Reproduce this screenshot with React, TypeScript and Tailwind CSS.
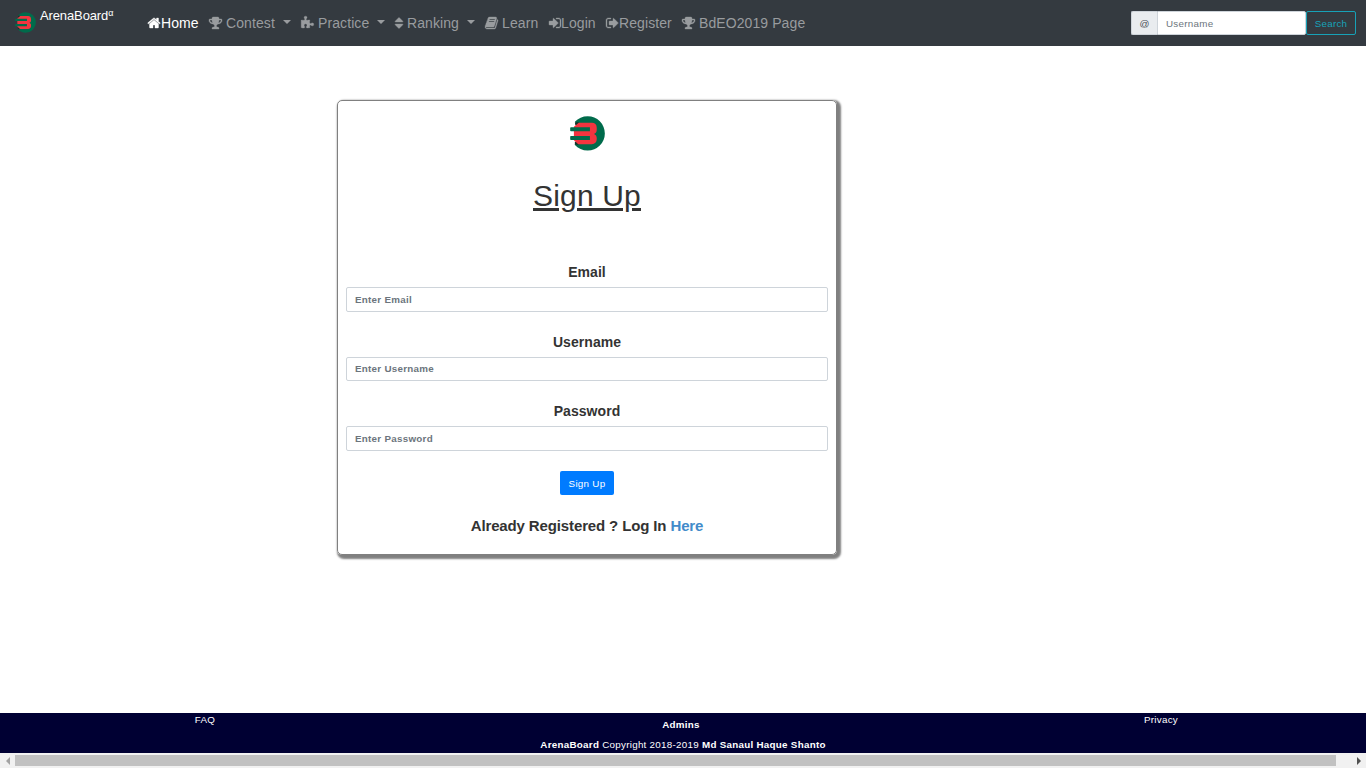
import React from "react";

const paths = {
  home: "M1408 992v480q0 26-19 45t-45 19h-384v-384h-256v384h-384q-26 0-45-19t-19-45v-480q0-1 .5-3t.5-3l575-474 575 474q1 2 1 6zm223-69l-62 74q-8 9-21 11h-3q-13 0-21-7l-692-577-692 577q-12 8-24 7-13-2-21-11l-62-74q-8-10-7-23.5t11-21.5l719-599q32-26 76-26t76 26l244 204v-195q0-14 9-23t23-9h192q14 0 23 9t9 23v408l219 182q10 8 11 21.5t-7 23.5z",
  trophy: "M522 883q-74-162-74-371h-256v96q0 78 94.5 162t235.5 113zm1078-275v-96h-256q0 209-74 371 141-29 235.500-113t94.500-162zm128-128v128q0 71-41.500 143t-112 130-173 97.500-215.500 44.500q-42 54-95 95-38 34-52.500 72.500t-14.500 89.500q0 54 30.500 91t97.500 37q75 0 133.500 45.500t58.500 114.500v64q0 14-9 23t-23 9h-832q-14 0-23-9t-9-23v-64q0-69 58.500-114.500t133.500-45.500q67 0 97.500-37t30.500-91q0-51-14.500-89.500t-52.500-72.500q-53-41-95-95-113-5-215.500-44.500t-173-97.500-112-130-41.500-143v-128q0-40 28-68t68-28h288v-96q0-66 47-113t113-47h576q66 0 113 47t47 113v96h288q40 0 68 28t28 68z",
  puzzle: "M1755 1083q0 81-44.500 135t-123.500 54q-41 0-77.500-17.500t-59-38-56.500-38-71-17.500q-110 0-110 124 0 39 16 115t15 115v5q-22 0-33 1-34 3-97.500 11.500t-115.500 13.500-98 5q-61 0-103-26.500t-42-83.500q0-37 17.500-71t38-56.500 38-59 17.500-77.500q0-79-54-123.500t-135-44.500q-84 0-143 45.500t-59 127.500q0 43 15 83t33.500 64.500 33.500 53 15 50.500q0 45-46 89-37 35-117 35-95 0-245-24-9-2-27.500-4t-27.500-4l-13-2q-1 0-3-1-2 0-2-1v-1024q2 1 17.500 3.500t34 5 21.500 3.500q150 24 245 24 80 0 117-35 46-44 46-89 0-22-15-50.500t-33.500-53-33.500-64.500-15-83q0-82 59-127.500t144-45.500q80 0 134 44.500t54 123.500q0 41-17.500 77.500t-38 59-38 56.500-17.500 71q0 57 42 83.500t103 26.500q64 0 180-15t163-17v2q-1 2-3.500 17.500t-5 34-3.500 21.500q-24 150-24 245 0 80 35 117 44 46 89 46 22 0 50.500-15t53-33.500 64.500-33.500 83-15q82 0 127.500 59t45.500 143z",
  sort: "M1408 1088q0 26-19 45l-448 448q-19 19-45 19t-45-19l-448-448q-19-19-19-45t19-45 45-19h896q26 0 45 19t19 45zm0-384q0 26-19 45t-45 19h-896q-26 0-45-19t-19-45 19-45l448-448q19-19 45-19t45 19l448 448q19 19 19 45z",
  book: "M1703 478q40 57 18 129l-275 906q-19 64-76.500 107.500t-122.500 43.500h-923q-77 0-148.500-53.500t-99.500-131.500q-24-67-2-127 0-4 3-27t4-37q1-8-3-21.500t-3-19.500q2-11 8-21t16.500-23.500 16.500-23.500q23-38 45-91.500t30-91.500q3-10 .5-30t-.5-28q3-11 17-28t17-23q21-36 42-92t25-90q1-9-2.500-32t.5-28q4-13 22-30.500t22-22.500q19-26 42.500-84.500t27.500-96.500q1-8-3-25.500t-2-26.500q2-8 9-18t18-23 17-21q8-12 16.500-30.500t15-35 16-36 19.500-32 26.500-23.500 36-11.500 47.500 5.500l-1 3q38-9 51-9h761q74 0 114 56t18 130l-274 906q-36 119-71.500 153.500t-128.500 34.500h-869q-27 0-38 15-11 16-1 43 24 70 144 70h923q29 0 56-15.500t35-41.500l300-987q7-22 5-57 38 15 59 43zm-1064 2q-4 13 2 22.500t20 9.500h608q13 0 25.500-9.500t16.500-22.500l21-64q4-13-2-22.500t-20-9.500h-608q-13 0-25.500 9.500t-16.500 22.500zm-83 256q-4 13 2 22.500t20 9.500h608q13 0 25.500-9.500t16.500-22.500l21-64q4-13-2-22.500t-20-9.500h-608q-13 0-25.500 9.500t-16.500 22.500z",
  signIn: "M1312 896q0 26-19 45l-544 544q-19 19-45 19t-45-19-19-45v-288h-448q-26 0-45-19t-19-45v-384q0-26 19-45t45-19h448v-288q0-26 19-45t45-19 45 19l544 544q19 19 19 45zm352-352v704q0 119-84.500 203.500t-203.500 84.500h-320q-13 0-22.500-9.500t-9.500-22.500q0-4-1-20t-.5-26.500 3-23.500 10-19.500 20.500-6.500h320q66 0 113-47t47-113v-704q0-66-47-113t-113-47h-312l-11.500-1-11.500-3-8-5.500-7-9-2-13.500q0-4-1-20t-.5-26.500 3-23.500 10-19.500 20.500-6.500h320q119 0 203.500 84.500t84.500 203.500z",
  signOut: "M704 1440q0 4 1 20t.5 26.500-3 23.500-10 19.500-20.500 6.500h-320q-119 0-203.500-84.500t-84.500-203.500v-704q0-119 84.500-203.500t203.500-84.500h320q13 0 22.500 9.500t9.500 22.500q0 4 1 20t.5 26.500-3 23.500-10 19.500-20.500 6.500h-320q-66 0-113 47t-47 113v704q0 66 47 113t113 47h312l11.500 1 11.500 3 8 5.500 7 9 2 13.500zm928-544q0 26-19 45l-544 544q-19 19-45 19t-45-19-19-45v-288h-448q-26 0-45-19t-19-45v-384q0-26 19-45t45-19h448v-288q0-26 19-45t45-19 45 19l544 544q19 19 19 45z",
};

type NavItem = {
  label: string;
  icon: keyof typeof paths;
  width: string;
  iconBox: string;
  viewBox: string;
  caret?: boolean;
  active?: boolean;
};

const nav: NavItem[] = [
  { label: "Home", icon: "home", width: "w-[61px]", iconBox: "w-[13px]", viewBox: "64 0 1664 1792", active: true },
  { label: "Contest", icon: "trophy", width: "w-[92px]", iconBox: "w-[13px] mr-1", viewBox: "64 0 1664 1792", caret: true },
  { label: "Practice", icon: "puzzle", width: "w-[94px]", iconBox: "w-[13px] mr-1", viewBox: "64 0 1728 1792", caret: true },
  { label: "Ranking", icon: "sort", width: "w-[90px]", iconBox: "w-2 mr-1", viewBox: "384 0 1024 1792", caret: true },
  { label: "Learn", icon: "book", width: "w-16", iconBox: "w-[13px] mr-1", viewBox: "64 0 1664 1792" },
  { label: "Login", icon: "signIn", width: "w-[57px]", iconBox: "w-3", viewBox: "128 0 1536 1792" },
  { label: "Register", icon: "signOut", width: "w-[76px]", iconBox: "w-[13px]", viewBox: "64 0 1664 1792" },
  { label: "BdEO2019 Page", icon: "trophy", width: "w-[130px]", iconBox: "w-[13px] mr-1", viewBox: "64 0 1664 1792" },
];

function Logo({ className }: { className: string }) {
  return (
    <svg className={className} viewBox="0 0 36 36">
      <path d="M5 6C8.500 2.300 13 .3 18.200 .3a17.600 17.600 0 0 1 0 35.300C13 35.600 8.300 33.300 4.800 29.600L8 27V9L5 6Z" fill="#006b4b" />
      <path d="M5 6.500H9v3H5.500zM5 26.500H9v3H5z" fill="#12362b" />
      <path d="M9 7H22.500c3 0 5 2 5 5v2.500c0 2-1 3.200-2.800 4 1.800.8 2.800 2.200 2.800 4V24c0 3-2 5-5 5H8.500L4 25V11Z" fill="#f3343f" />
      <path d="M1 11.600h19.500v4H1a.8.800 0 0 1-.8-.8v-2.400a.8.800 0 0 1 .8-.8ZM1 20.600h19.500v4H1a.8.800 0 0 1-.8-.8v-2.400a.8.800 0 0 1 .8-.8Z" fill="#006b4b" />
    </svg>
  );
}

function Field({ label, type, box }: { label: string; type: string; box: string }) {
  return (
    <label className="mb-5 flex flex-col items-stretch text-center text-sm font-bold tracking-[0.06px]">
      <span className="h-[25px] leading-5">{label}</span>
      <input
        type={type}
        placeholder={"Enter " + label}
        className={"w-full rounded-[2px] border border-[#ced4da] bg-white px-2 text-[9.8px] font-bold leading-[15px] tracking-[0.28px] text-[#495057] outline-none placeholder:text-[#6c757d] placeholder:opacity-100 " + box}
      />
    </label>
  );
}

export default function App() {
  return (
    <div className="flex h-screen w-full flex-col overflow-hidden bg-white font-['Liberation_Sans',Arial,sans-serif] text-[#333]">
      <header className="flex h-[46px] shrink-0 items-center bg-[#343a40] pr-[10px]">
        <a className="flex h-full w-[132px] shrink-0 pl-[15px] text-white">
          <Logo className="mt-3 h-[21px] w-[21px] shrink-0" />
          <span className="ml-1 mt-2 text-[13px] leading-4 tracking-[-0.12px]">
            ArenaBoard<sup className="top-[-0.5em] text-[9px] leading-none">α</sup>
          </span>
        </a>
        <nav className="flex flex-1 pl-4">
          {nav.map((n) => (
            <a key={n.label} className={"flex h-5 shrink-0 items-center whitespace-nowrap text-sm leading-5 " + n.width + (n.active ? " text-white" : " text-[#999c9f]")}>
              <svg className={"h-[14px] shrink-0 overflow-visible " + n.iconBox} viewBox={n.viewBox} fill="currentColor" stroke="currentColor" strokeWidth="45">
                <path d={paths[n.icon]} />
              </svg>
              <span className="tracking-[0.09px]">{n.label}</span>
              {n.caret && <span className="mb-0.5 ml-2 border-x-4 border-t-4 border-x-transparent border-t-current" />}
            </a>
          ))}
        </nav>
        <form className="flex h-6 w-[225px] shrink-0 text-[9.8px] leading-[15px] tracking-[0.28px]">
          <span className="flex w-[26px] shrink-0 items-center justify-center rounded-l-[2px] border border-r-0 border-[#ced4da] bg-[#e9ecef] text-[#495057]">@</span>
          <input placeholder="Username" className="w-[149px] shrink-0 rounded-r-[2px] border border-[#ced4da] bg-white px-2 outline-none placeholder:text-[#6c757d] placeholder:opacity-100" />
          <button type="button" className="w-[50px] shrink-0 rounded-[2px] border border-[#17a2b8] text-[#17a2b8]">Search</button>
        </form>
      </header>

      <main className="flex flex-1 items-start pl-[337px] pt-[54px]">
        <section className="flex h-[455px] w-[500px] flex-col items-center rounded-[5px] border border-[#808080] px-2 pt-[14px] shadow-[2px_2px_2px_2px_#808080]">
          <Logo className="ml-px mt-px h-[35px] w-[35px] shrink-0" />
          <h1 className="mt-[28px] text-[30px] leading-[33px] tracking-[0.18px] underline">Sign Up</h1>
          <form className="mt-[50px] flex w-full flex-col items-center">
            <div className="w-full">
              <Field label="Email" type="email" box="h-[25px]" />
              <Field label="Username" type="text" box="h-6 pb-px" />
              <Field label="Password" type="password" box="h-[25px]" />
            </div>
            <button type="button" className="h-6 w-[54px] rounded-[2px] bg-[#007bff] text-[9.8px] leading-[15px] tracking-[0.28px] text-white">Sign Up</button>
          </form>
          <p className="mt-[22px] text-[15px] font-bold leading-[18px] tracking-[-0.13px]">
            Already Registered ? Log In <a className="text-[#428bca]">Here</a>
          </p>
        </section>
      </main>

      <footer className="flex h-10 shrink-0 bg-[#000033] text-[9.8px] leading-[14px] tracking-[0.28px] text-white">
        <div className="w-[410px] text-center">FAQ</div>
        <div className="flex w-[546px] flex-col items-center pt-[5px]">
          <strong className="mr-1">Admins</strong>
          <span className="mt-[6px]"><strong>ArenaBoard</strong> Copyright 2018-2019 <strong>Md Sanaul Haque Shanto</strong></span>
        </div>
        <div className="w-[410px] text-center">Privacy</div>
      </footer>
      <div className="flex h-[15px] shrink-0 items-center bg-[#f1f1f1]">
        <div className="flex w-[15px] justify-center"><span className="border-y-4 border-r-4 border-y-transparent border-r-[#a3a3a3]" /></div>
        <div className="h-[11px] w-[1321px] bg-[#c1c1c1]" />
        <div className="flex flex-1 justify-end pr-[5px]"><span className="border-y-4 border-l-4 border-y-transparent border-l-[#505050]" /></div>
      </div>
    </div>
  );
}
